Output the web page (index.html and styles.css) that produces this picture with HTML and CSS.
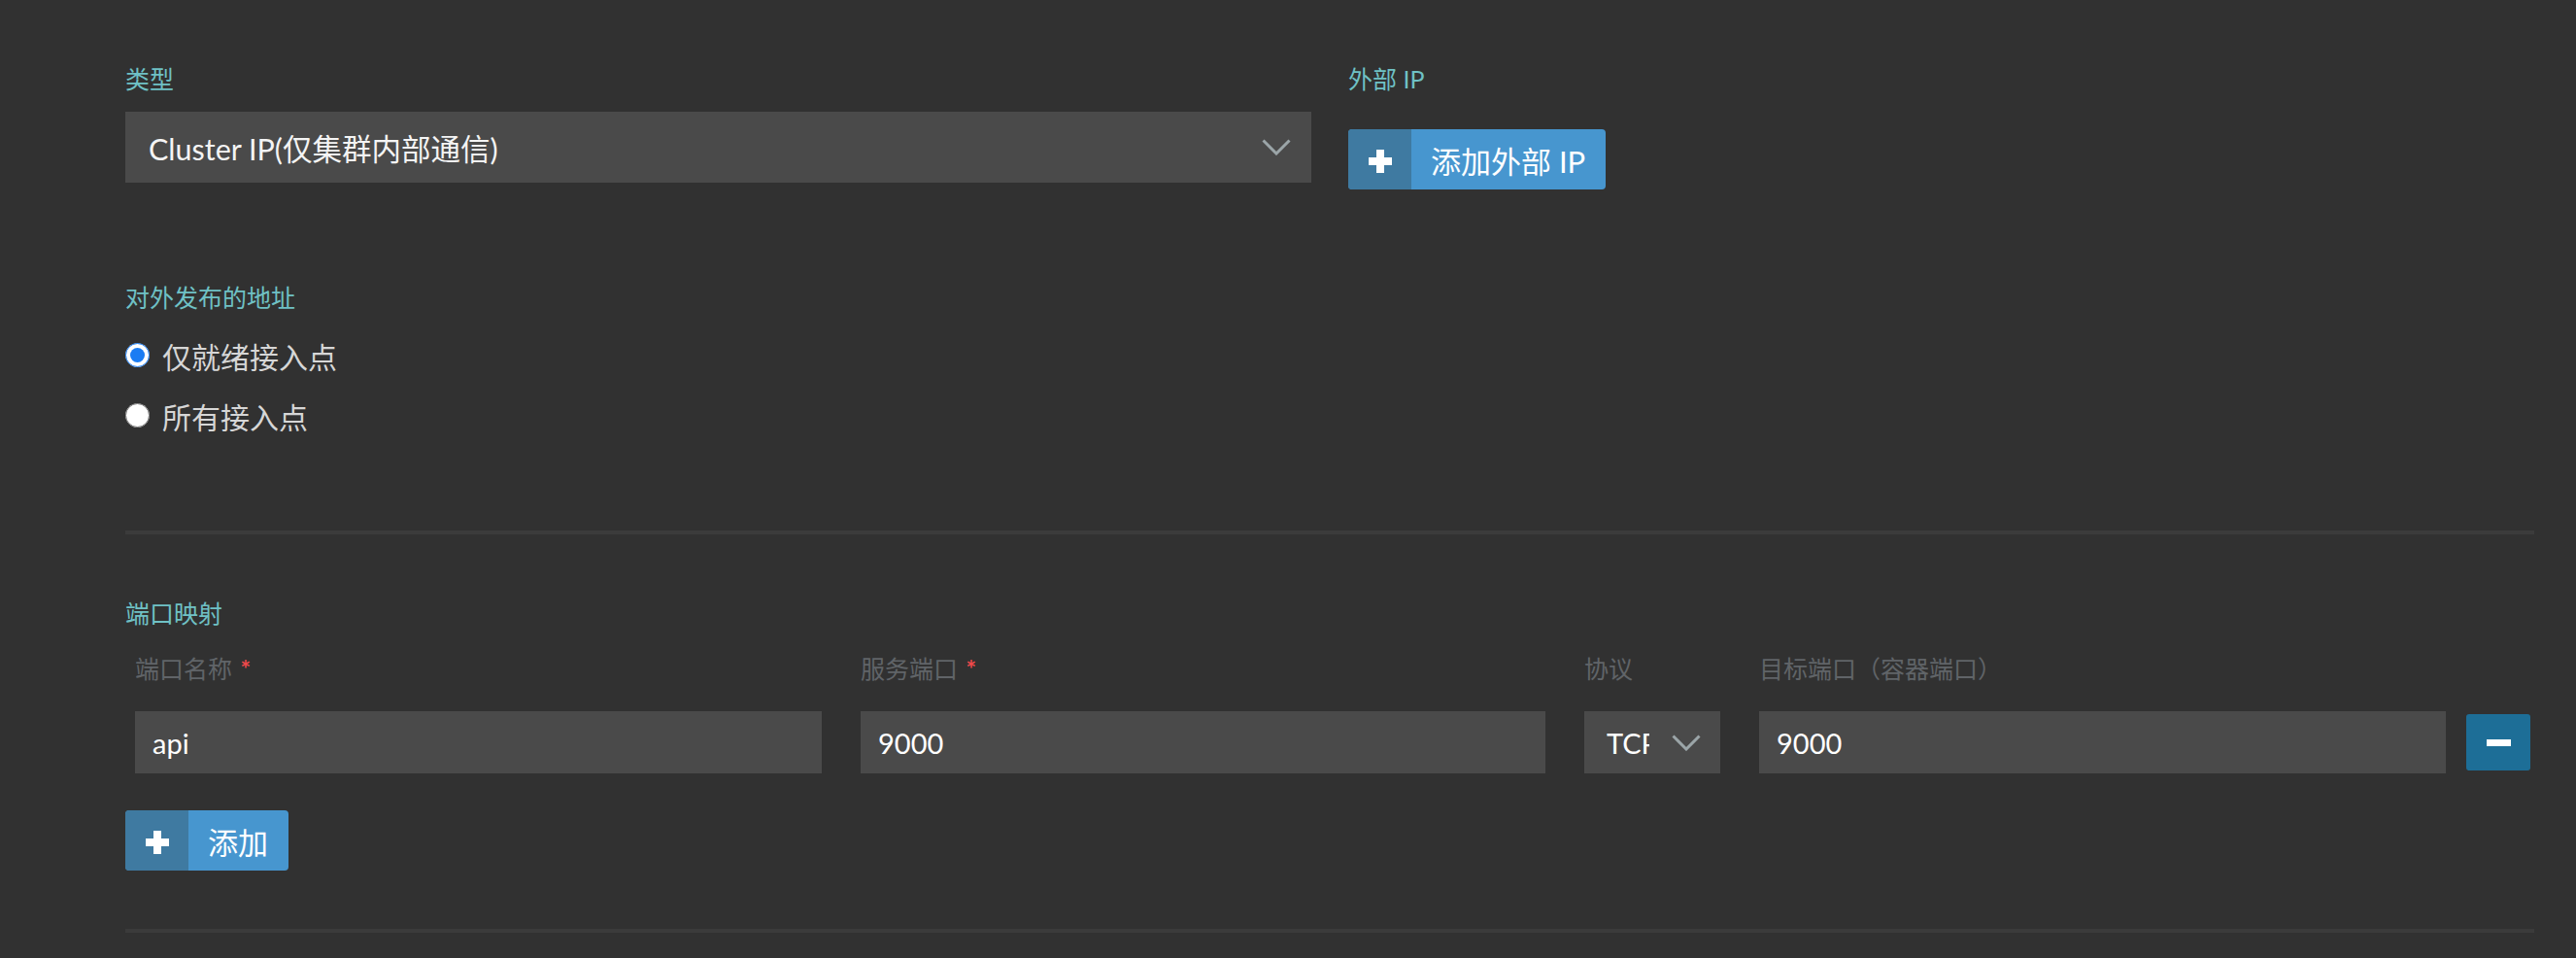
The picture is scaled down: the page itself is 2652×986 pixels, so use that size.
FILE: index.html
```html
<!DOCTYPE html>
<html lang="zh-CN">
<head>
<meta charset="utf-8">
<title>Service</title>
<link rel="stylesheet" href="styles.css">
</head>
<body>
<main class="page">
  <section class="top-row">
    <div class="col">
      <div class="field-label">类型</div>
      <div class="select select-type">
        <span class="select-text">Cluster IP(仅集群内部通信)</span>
        <svg class="chevron" width="30" height="17" viewBox="0 0 30 17"><polyline points="1.5,1.5 15,15 28.5,1.5" fill="none" stroke="currentColor" stroke-width="3"/></svg>
      </div>
    </div>
    <div class="col">
      <div class="field-label">外部 IP</div>
      <button class="btn btn-ext" type="button">
        <span class="btn-icon"><svg width="24" height="24" viewBox="0 0 24 24"><rect x="8" y="0" width="8" height="24" fill="#fff"/><rect x="0" y="8" width="24" height="8" fill="#fff"/></svg></span>
        <span class="btn-text">添加外部 IP</span>
      </button>
    </div>
  </section>

  <section class="publish">
    <div class="field-label">对外发布的地址</div>
    <div class="radio-row"><input class="radio" type="radio" name="pub" id="pub1" checked><label class="radio-text" for="pub1">仅就绪接入点</label></div>
    <div class="radio-row"><input class="radio" type="radio" name="pub" id="pub2"><label class="radio-text" for="pub2">所有接入点</label></div>
  </section>

  <hr class="divider divider-first">

  <section class="ports">
    <div class="field-label">端口映射</div>
    <div class="port-grid">
      <div class="col-head">端口名称 <span class="req">*</span></div>
      <div class="col-head">服务端口 <span class="req">*</span></div>
      <div class="col-head">协议</div>
      <div class="col-head">目标端口（容器端口）</div>
      <div class="col-head"></div>

      <div class="input">api</div>
      <div class="input">9000</div>
      <div class="select select-proto">
        <span class="select-text proto-text">TCP</span>
        <svg class="chevron" width="30" height="17" viewBox="0 0 30 17"><polyline points="1.5,1.5 15,15 28.5,1.5" fill="none" stroke="currentColor" stroke-width="3"/></svg>
      </div>
      <div class="input">9000</div>
      <button class="btn-remove" type="button"><span class="minus"></span></button>
    </div>
    <button class="btn btn-add" type="button">
      <span class="btn-icon"><svg width="24" height="24" viewBox="0 0 24 24"><rect x="8" y="0" width="8" height="24" fill="#fff"/><rect x="0" y="8" width="24" height="8" fill="#fff"/></svg></span>
      <span class="btn-text">添加</span>
    </button>
  </section>

  <hr class="divider divider-last">
</main>
</body>
</html>
```

FILE: styles.css
```css
* { box-sizing: border-box; }

html, body {
  margin: 0;
  background: #313131;
}

body {
  font-family: Lato, "Noto Sans CJK SC", sans-serif;
  color: #ffffff;
}

.page {
  padding: 66px 43px 0 129px;
}

.field-label {
  font-size: 25px;
  line-height: 30px;
  height: 30px;
  color: #6fc1c5;
}

.top-row {
  display: grid;
  grid-template-columns: 1221px 1221px;
  column-gap: 38px;
}

.top-row .select-type {
  margin-top: 19px;
}

.select {
  display: flex;
  align-items: center;
  background: #4a4a4a;
  color: #f4f4f4;
  font-size: 30.5px;
}

.select-type {
  height: 73px;
  padding: 0 21px 0 24px;
  justify-content: space-between;
}

.chevron {
  color: #9ba5a8;
  flex: none;
}

.btn {
  display: inline-flex;
  align-items: stretch;
  height: 62px;
  padding: 0;
  border: 0;
  border-radius: 4px;
  overflow: hidden;
  background: #4796cf;
  color: #ffffff;
  font-family: inherit;
  font-size: 31px;
  cursor: pointer;
}

.btn-icon {
  width: 65px;
  background: #3f7aa1;
  display: flex;
  align-items: center;
  justify-content: center;
  padding-top: 4px;
}

.btn-text {
  display: flex;
  align-items: center;
  padding: 0 21px 0 20px;
  white-space: nowrap;
  font-size: 31px;
}

.btn-ext {
  margin-top: 37px;
}

.publish {
  margin-top: 96px;
}

.publish .field-label {
  margin-bottom: 13px;
}

.radio-row {
  display: flex;
  align-items: center;
  height: 62px;
  color: #d6d6d6;
  font-size: 30px;
}

.radio-text {
  font-size: 30px;
  line-height: 36px;
  padding-top: 3px;
}

.radio {
  width: 25px;
  height: 25px;
  margin: 0 13px 0 0;
  flex: none;
  accent-color: #1a7cf3;
}

.divider {
  border: 0;
  height: 4px;
  background: #3b3b3b;
  margin: 0;
}

.divider-first {
  margin-top: 88px;
}

.ports {
  margin-top: 66px;
}

.port-grid {
  display: grid;
  grid-template-columns: 707px 705px 140px 707px 66px;
  column-gap: 40px;
  row-gap: 29px;
  margin: 27px 0 0 10px;
}

.col-head {
  font-size: 25px;
  line-height: 30px;
  height: 30px;
  color: #606468;
  white-space: nowrap;
}

.req {
  color: #f0494b;
  margin-left: 2px;
  font-weight: 700;
}

.input {
  height: 64px;
  background: #4a4a4a;
  display: flex;
  align-items: center;
  padding-left: 18px;
  font-size: 29px;
  color: #ffffff;
}

.select-proto {
  height: 64px;
  padding: 0 20px 0 23px;
  font-size: 29px;
  color: #ffffff;
}

.proto-text {
  width: 44px;
  overflow: hidden;
  white-space: nowrap;
  margin-right: 23px;
  flex: none;
}

.btn-remove {
  align-self: center;
  margin-left: -19px;
  width: 66px;
  height: 58px;
  border: 0;
  border-radius: 3px;
  background: #1d6e97;
  display: flex;
  align-items: center;
  justify-content: center;
  padding: 0;
  cursor: pointer;
}

.minus {
  display: block;
  width: 25px;
  height: 7px;
  background: #ffffff;
}

.btn-add {
  margin-top: 38px;
}

.divider-last {
  margin-top: 60px;
}
```
